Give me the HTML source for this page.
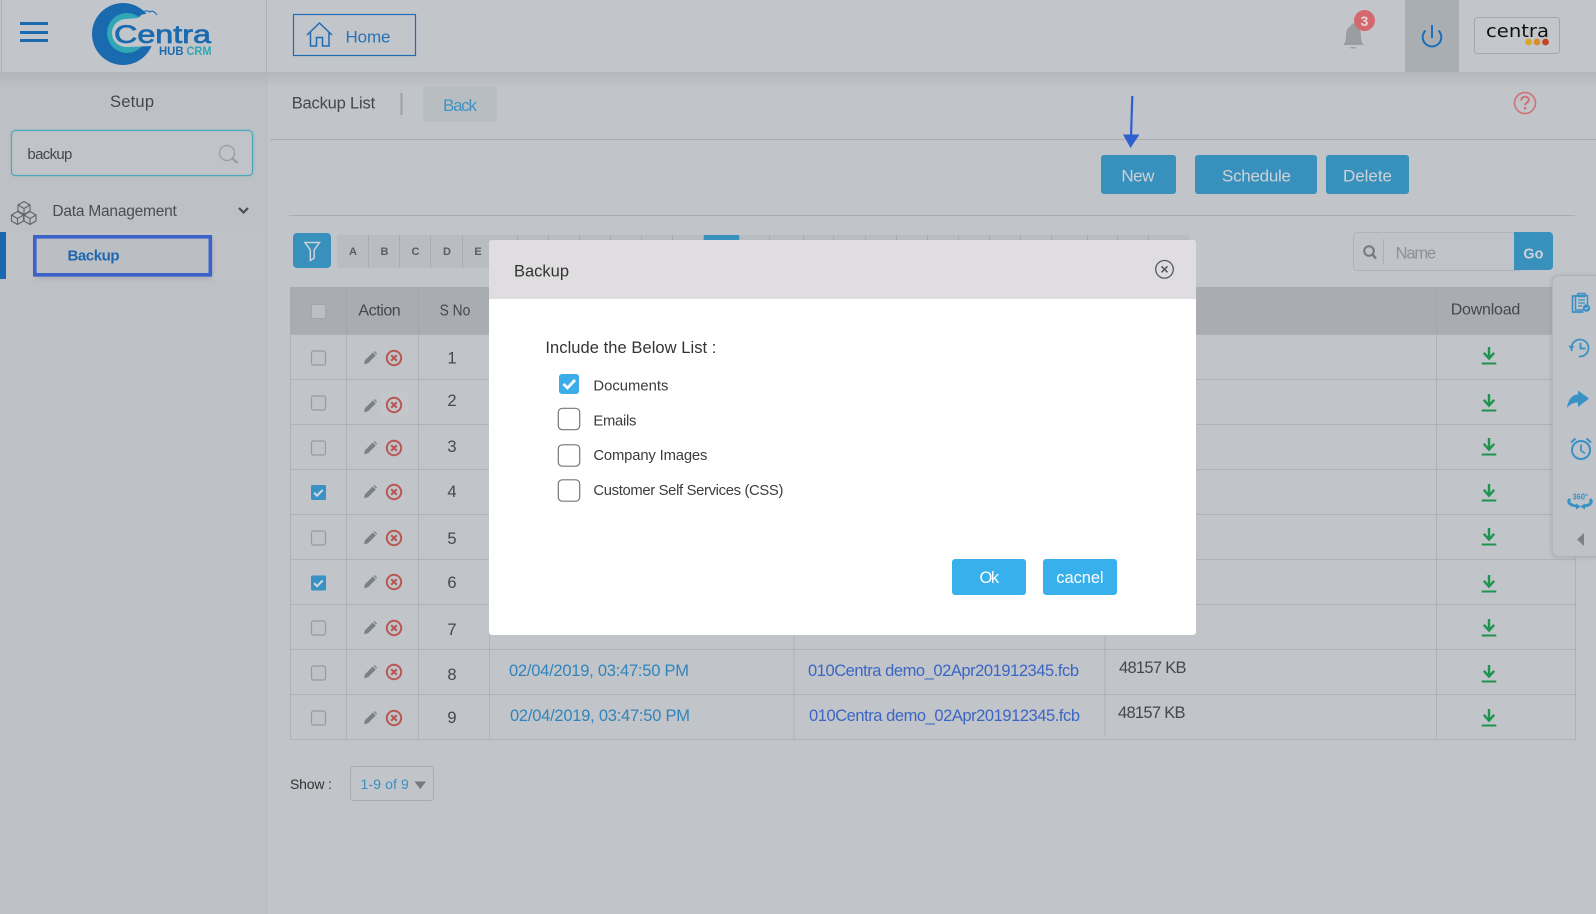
<!DOCTYPE html>
<html lang="en"><head><meta charset="utf-8"><title>Backup List</title>
<style>
html,body{margin:0;padding:0;width:1596px;height:914px;overflow:hidden;background:#c1c4c9}
svg{display:block}
text{font-family:"Liberation Sans",sans-serif;fill:#44484c;font-size:16.500px}
.b{fill:#3f94c1}
.w{fill:#cdd2d6;font-size:17px}
.f{fill:#3a66c5}
.d{fill:#2f85bb}
.l{font-size:11px;font-weight:bold;fill:#5a5e62;text-anchor:middle}
.m{font-size:14.800px;fill:#3c3c3c}
</style></head><body>
<svg width="1596" height="914" viewBox="0 0 1596 914" xmlns="http://www.w3.org/2000/svg">
<defs>
<linearGradient id="hs" x1="0" y1="0" x2="0" y2="1"><stop offset="0" stop-color="#a9adb2"/><stop offset="1" stop-color="#a9adb2" stop-opacity="0"/></linearGradient>
<filter id="sd" x="-20%" y="-20%" width="140%" height="140%"><feGaussianBlur stdDeviation="2.500"/></filter>
<g id="pen"><path d="M-6 6.300l1-4L2.800-5.500l3 3L-2 5.300z" fill="#7a8087"/><path d="M3.600-6.200l.9-.8 2.600 2.600-.9.9z" fill="#7a8087"/></g>
<g id="x"><circle r="7.200" fill="none" stroke="#b85853" stroke-width="2"/><path d="M-2.800-2.800l5.600 5.600M2.800-2.800l-5.600 5.600" stroke="#b85853" stroke-width="2.100" fill="none"/></g>
<g id="dl"><path d="M0-9V1.500" stroke="#1f9450" stroke-width="2.400"/><path d="M-5.200-3.200L0 2.600l5.200-5.800" fill="none" stroke="#1f9450" stroke-width="2.400"/><rect x="-7.300" y="6.500" width="14.600" height="2" fill="#1f9450"/></g>
<g id="cb"><rect x="-7" y="-7" width="14" height="14" rx="2" fill="#bfc3c8" stroke="#989ca1" stroke-width="1.200"/></g>
<g id="cc"><rect x="-7.500" y="-7.500" width="15" height="15" rx="1.500" fill="#3a91c4"/><path d="M-4.400.2l3 3 5.600-5.800" fill="none" stroke="#d5dade" stroke-width="2"/></g>
<g id="mb"><rect x="-10.700" y="-10.700" width="21.400" height="21.400" rx="4" fill="#fff" stroke="#777" stroke-width="1.200"/></g>
</defs>

<!-- page -->
<rect width="1596" height="914" fill="#c1c4c9"/>
<rect x="0" y="72" width="266" height="842" fill="#bdc1c5"/>
<rect x="266" y="72" width="1" height="842" fill="#b9bdc1"/>
<rect x="0" y="72" width="1596" height="16" fill="url(#hs)" opacity=".55"/>

<!-- header -->
<rect width="1596" height="72" fill="#c2c5ca"/>
<rect x="1" y="0" width="1" height="72" fill="#adb1b5"/>
<rect x="266" y="0" width="1" height="72" fill="#adb1b5"/>
<g fill="#1a6ab0"><rect x="20" y="22" width="28" height="3"/><rect x="20" y="31" width="28" height="3"/><rect x="20" y="39" width="28" height="3"/></g>

<!-- logo -->
<circle cx="123" cy="34" r="31" fill="#1a6ab0"/>
<circle cx="127" cy="33" r="20" fill="#2fa7b5"/>
<circle cx="126" cy="33" r="14" fill="#c2c5ca"/>
<path d="M126 19L138 18C141 14 146 13 150 15L156 16V14H215V60H155L153 46L126 47z" fill="#c2c5ca"/>
<path d="M139 17C141 12 146 9 150 12C152 10 155 12 157 15" stroke="#1a6ab0" stroke-width="1.100" fill="none"/>
<text x="114" y="43" style="font-size:25px;fill:#1a6ab0;stroke:#1a6ab0;stroke-width:.7" textLength="97" lengthAdjust="spacingAndGlyphs">Centra</text>
<text x="159" y="55" style="font-size:11.500px;font-weight:bold;fill:#1a6ab0" textLength="24.500" lengthAdjust="spacingAndGlyphs">HUB</text>
<text x="186.500" y="55" style="font-size:11.500px;font-weight:bold;fill:#2fa7b5" textLength="25" lengthAdjust="spacingAndGlyphs">CRM</text>

<!-- home -->
<rect x="293.500" y="14.500" width="122" height="41" fill="none" stroke="#1e6db5" stroke-width="1.200"/>
<path d="M307 35L319.500 23 332 35M310.500 32.500V46H316.500V37.500H322.500V46H329V32.500" fill="none" stroke="#1e6db5" stroke-width="1.500"/>
<text x="345.500" y="42.500" style="fill:#2a72b5;font-size:17px" textLength="45">Home</text>

<!-- right header -->
<path d="M1344 45c2.500-2 3-5 3-9.500 0-5 2-8.500 5-9.500a2.500 2.500 0 0 1 5 0c3 1 5 4.500 5 9.500 0 4.500 .5 7.500 3 9.500z" fill="#9a9ea2" transform="translate(-1 0)"/>
<path d="M1350 47h6l-1 1.500h-4z" fill="#9a9ea2"/>
<circle cx="1364.500" cy="20.500" r="10.500" fill="#d4686e"/>
<text x="1360.500" y="26" style="font-size:14px;font-weight:bold;fill:#e6d9da">3</text>
<rect x="1405" y="0" width="54" height="72" fill="#a9aeb2"/>
<path d="M1425.500 30.500a9.300 9.300 0 1 0 13 0M1432 25v13" fill="none" stroke="#1a6fb8" stroke-width="2"/>
<rect x="1474.500" y="17.500" width="85" height="36" rx="3" fill="#c3c6cb" stroke="#a4a8ac"/>
<text x="1486" y="37" style="font-size:18px;fill:#111;font-family:'DejaVu Sans',sans-serif" textLength="63" lengthAdjust="spacingAndGlyphs">centra</text>
<circle cx="1528.500" cy="42" r="3.400" fill="#d9a82a"/><circle cx="1537" cy="42" r="3.400" fill="#d98c2a"/><circle cx="1545.500" cy="42" r="3.400" fill="#c0442a"/>

<!-- sidebar -->
<text x="110" y="107" textLength="44">Setup</text>
<rect x="12" y="131" width="241" height="44" rx="4" fill="#4aa9b8" opacity=".4" filter="url(#sd)"/>
<rect x="11.500" y="130.500" width="241" height="45" rx="4" fill="#c0c4c8" stroke="#4aa9b8" stroke-width="1.200"/>
<text x="27.400" y="159" style="font-size:15px" textLength="45">backup</text>
<circle cx="227" cy="153" r="7.500" fill="none" stroke="#989ca0" stroke-width="1.200"/>
<path d="M232.500 158.500l5 4.500" stroke="#989ca0" stroke-width="2.200"/>
<g fill="none" stroke="#5f6468" stroke-width="1.100">
<path d="M18 205l6-3.500 6 3.500v6l-6 3.500-6-3.500zM18 205l6 3.500 6-3.500M24 208.500v6"/>
<path d="M11.500 215l6-3.500 6 3.500v6l-6 3.500-6-3.500zM11.500 215l6 3.500 6-3.500M17.500 218.500v6"/>
<path d="M24 215l6-3.500 6 3.500v6l-6 3.500-6-3.500zM24 215l6 3.500 6-3.500M30 218.500v6"/>
</g>
<text x="52.400" y="216" style="font-size:15.500px;fill:#4a4e52" textLength="124.400">Data Management</text>
<path d="M239 208l4.500 4.500 4.500-4.500" fill="none" stroke="#4a4e52" stroke-width="2.200"/>
<rect x="0" y="232" width="264" height="47" fill="#bfc3c8"/>
<rect x="0" y="232" width="6" height="47" fill="#1a69b0"/>
<rect x="36" y="239" width="176" height="39" fill="#8b9097" opacity=".55" filter="url(#sd)"/>
<rect x="34.800" y="236.800" width="175.500" height="38" fill="#bbbfc4" stroke="#3a62c8" stroke-width="3.600"/>
<text x="67.500" y="260.700" style="font-size:15px;font-weight:bold;fill:#1f66b0" textLength="52">Backup</text>

<!-- toolbar -->
<text x="291.700" y="108.700" textLength="83.500">Backup List</text>
<rect x="400.500" y="93" width="2" height="22" fill="#9ca0a4"/>
<rect x="423" y="86" width="74" height="36" rx="4" fill="#b8bdc2"/>
<text x="443" y="111" class="b" textLength="34" style="font-size:17px">Back</text>
<path d="M1525 92.500a10.500 10.500 0 1 0 .01 0z" fill="none" stroke="#cc7478" stroke-width="1.700"/>
<path d="M1521.300 100.500c0-5 7.500-5 7.500-.5 0 2.600-3.700 2.500-3.700 5.200" fill="none" stroke="#cc7478" stroke-width="2"/>
<rect x="1523.800" y="107" width="2.500" height="2.500" fill="#cc7478"/>
<rect x="270" y="139" width="1326" height="1" fill="#a9adb1"/>
<rect x="289" y="215" width="1286" height="1" fill="#a9adb1"/>

<path d="M1132.300 96L1131 137" stroke="#2f5fd0" stroke-width="2.200"/>
<path d="M1123 134.500h16.500L1130.500 148z" fill="#2f5fd0"/>

<g fill="#3890bd">
<rect x="1101" y="155" width="75" height="39" rx="3"/>
<rect x="1195" y="155" width="122" height="39" rx="3"/>
<rect x="1326" y="155" width="83" height="39" rx="3"/>
<rect x="293" y="233" width="38" height="35" rx="4"/>
</g>
<text x="1121.400" y="181.700" class="w" textLength="33">New</text>
<text x="1222" y="181.700" class="w" textLength="69">Schedule</text>
<text x="1343" y="181.700" class="w" textLength="49">Delete</text>
<path d="M305 242.500h14.500l-5.300 7.500v8l-3.900 2.500V250z" fill="none" stroke="#cdd2d6" stroke-width="1.500"/>

<!-- alpha bar -->
<rect x="337" y="235" width="852" height="33" rx="2" fill="#b9bdc2"/>
<g fill="#a9adb1">
<rect x="368" y="235" width="1" height="33"/><rect x="399" y="235" width="1" height="33"/><rect x="430" y="235" width="1" height="33"/><rect x="462" y="235" width="1" height="33"/>
<rect x="517" y="235" width="1" height="33"/><rect x="548" y="235" width="1" height="33"/><rect x="579" y="235" width="1" height="33"/><rect x="610" y="235" width="1" height="33"/><rect x="641" y="235" width="1" height="33"/>
<rect x="672" y="235" width="1" height="33"/><rect x="703" y="235" width="1" height="33"/><rect x="739" y="235" width="1" height="33"/><rect x="769" y="235" width="1" height="33"/><rect x="803" y="235" width="1" height="33"/><rect x="833" y="235" width="1" height="33"/><rect x="865" y="235" width="1" height="33"/>
<rect x="896" y="235" width="1" height="33"/><rect x="927" y="235" width="1" height="33"/><rect x="958" y="235" width="1" height="33"/><rect x="989" y="235" width="1" height="33"/><rect x="1020" y="235" width="1" height="33"/><rect x="1051" y="235" width="1" height="33"/>
<rect x="1087" y="235" width="1" height="33"/><rect x="1117" y="235" width="1" height="33"/><rect x="1148" y="235" width="1" height="33"/>
</g>
<rect x="704" y="235" width="35" height="33" fill="#3890bd"/>
<text x="353" y="255" class="l">A</text><text x="384.500" y="255" class="l">B</text><text x="415.500" y="255" class="l">C</text><text x="447" y="255" class="l">D</text><text x="478" y="255" class="l">E</text>

<!-- name search -->
<rect x="1353.500" y="232.500" width="170" height="38" rx="4" fill="#c0c4c8" stroke="#b0b4b8"/>
<path d="M1514 232h35a4 4 0 0 1 4 4v30a4 4 0 0 1-4 4h-35z" fill="#3890bd"/>
<circle cx="1369" cy="251" r="4.800" fill="none" stroke="#75797d" stroke-width="2"/><path d="M1372.500 254.500l3.500 4" stroke="#75797d" stroke-width="2.400"/>
<rect x="1383" y="239" width="1" height="25" fill="#acb0b4"/>
<text x="1395.600" y="258.700" style="fill:#8e9296;font-size:16.500px" textLength="40.500">Name</text>
<text x="1523.400" y="258.700" class="w" style="font-size:15px;font-weight:bold" textLength="20" lengthAdjust="spacingAndGlyphs">Go</text>

<!-- table -->
<rect x="290" y="287" width="1286" height="47" fill="#a9adb2"/>
<g stroke="#aeb1b6" fill="none">
<path d="M290 334.500H1576M290 379.500H1576M290 424.500H1576M290 469.500H1576M290 514.500H1576M290 559.500H1576M290 604.500H1576M290 649.500H1576M290 694.500H1576M290 739.500H1576"/>
<path d="M290.500 334V740M346.500 334V740M418.500 334V740M489.500 334V740M794 334V740M1105 334V736M1436.500 334V740M1575.500 334V740"/>
</g>
<g fill="#a2a6ab"><rect x="346" y="287" width="1" height="47"/><rect x="418" y="287" width="1" height="47"/><rect x="1436" y="287" width="1" height="47"/></g>
<text x="358.400" y="315.700" textLength="42.300" style="font-size:16px">Action</text>
<text x="439.600" y="315.700" style="font-size:16px" textLength="30.700" lengthAdjust="spacingAndGlyphs">S No</text>
<text x="1450.700" y="314.300" textLength="69.600" style="font-size:16px">Download</text>
<rect x="311.500" y="304.500" width="14" height="14" rx="2" fill="#bcc0c5" stroke="#a3a7ab"/>

<use href="#cb" x="318.500" y="358"/><use href="#cb" x="318.500" y="403"/><use href="#cb" x="318.500" y="448"/><use href="#cc" x="318.500" y="492.500"/><use href="#cb" x="318.500" y="538"/><use href="#cc" x="318.500" y="583"/><use href="#cb" x="318.500" y="628"/><use href="#cb" x="318.500" y="673"/><use href="#cb" x="318.500" y="718"/>

<rect x="382" y="391" width="27" height="26" fill="#c3c6ca"/>
<use href="#pen" x="370" y="358"/><use href="#pen" x="370" y="406"/><use href="#pen" x="370" y="448"/><use href="#pen" x="370" y="492"/><use href="#pen" x="370" y="538"/><use href="#pen" x="370" y="582"/><use href="#pen" x="370" y="628"/><use href="#pen" x="370" y="672"/><use href="#pen" x="370" y="718"/>
<use href="#x" x="394" y="358"/><use href="#x" x="394" y="405"/><use href="#x" x="394" y="448"/><use href="#x" x="394" y="492"/><use href="#x" x="394" y="538"/><use href="#x" x="394" y="582"/><use href="#x" x="394" y="628"/><use href="#x" x="394" y="672"/><use href="#x" x="394" y="718"/>

<g text-anchor="middle">
<text x="452" y="363.500">1</text><text x="452" y="406">2</text><text x="452" y="452">3</text><text x="452" y="497">4</text><text x="452" y="544">5</text><text x="452" y="588">6</text><text x="452" y="635">7</text><text x="452" y="680">8</text><text x="452" y="723">9</text>
</g>

<use href="#dl" x="1489" y="356"/><use href="#dl" x="1489" y="403"/><use href="#dl" x="1489" y="447"/><use href="#dl" x="1489" y="493"/><use href="#dl" x="1489" y="537"/><use href="#dl" x="1489" y="584"/><use href="#dl" x="1489" y="628"/><use href="#dl" x="1489" y="674"/><use href="#dl" x="1489" y="718"/>

<text x="509" y="676" class="d" textLength="180">02/04/2019, 03:47:50 PM</text>
<text x="510" y="721" class="d" textLength="180">02/04/2019, 03:47:50 PM</text>
<text x="808" y="676" class="f" textLength="271">010Centra demo_02Apr201912345.fcb</text>
<text x="809" y="721" class="f" textLength="271">010Centra demo_02Apr201912345.fcb</text>
<text x="1119" y="673" textLength="67.500">48157 KB</text>
<text x="1118" y="718" textLength="67.500">48157 KB</text>

<!-- show -->
<text x="290" y="789" style="font-size:14px;fill:#333" textLength="42">Show :</text>
<rect x="350.500" y="766.500" width="83" height="34" rx="3" fill="#c1c4c9" stroke="#a9adb1"/>
<text x="360.500" y="789" style="font-size:14px;fill:#3a91c4" textLength="48.300">1-9 of 9</text>
<path d="M414.500 781.500h11.500L420.200 789z" fill="#75797d"/>

<!-- right floating panel -->
<rect x="1552" y="276" width="50" height="281" rx="6" fill="#8f9398" opacity=".6" filter="url(#sd)"/>
<rect x="1552.500" y="275.500" width="50" height="281" rx="6" fill="#bfc3c8" stroke="#b0b4b8"/>
<g fill="none" stroke="#3a91c4" stroke-width="1.700">
<path d="M1577 296h-4.500v16h11"/>
<path d="M1575.500 295.500v14.500h9M1575.500 295.500h12v9M1578 293.500h7v3h-7z" stroke-width="1.500"/>
<path d="M1578 300h7M1578 303h7M1578 306h4" stroke-width="1.300"/>
<circle cx="1580" cy="348" r="8.500" stroke-dasharray="44 9.400" transform="rotate(160 1580 348)" stroke-width="1.800"/>
<path d="M1580.500 343v5.500h5" stroke-width="1.900"/>
<circle cx="1581" cy="450" r="9" stroke-width="2"/>
<path d="M1581 444.500v6l4 3" stroke-width="1.700"/>
<path d="M1571 442.500l4.500-4M1586.500 438.500l4.500 4" stroke-width="2"/>
<path d="M1570 499c-3 3.500 0 6.500 7 7M1590 499c3 3.500 0 6.500-6 7" stroke-width="3"/>
</g>
<circle cx="1586.500" cy="308" r="3.800" fill="#3a91c4"/><path d="M1584.800 308l1.300 1.300 2.200-2.400" stroke="#c5cace" fill="none" stroke-width=".8"/>
<path d="M1568.500 345.500l2.600 4.500 3.400-3.800z" fill="#3a91c4"/>
<path d="M1578 390.500L1589 398.500 1578 407V402.500C1573 402.500 1570 404.500 1567 408 1568 400 1572 394.500 1578 394.500z" fill="#3a91c4"/>
<text x="1572.500" y="499.500" style="font-size:8.500px;font-weight:bold;fill:#3a91c4" textLength="15.500" lengthAdjust="spacingAndGlyphs">360°</text>
<path d="M1576 503.500l5 3-5 3zM1585 503.500l-5 3 5 3z" fill="#3a91c4"/>
<path d="M1584 533v13l-7-6.500z" fill="#7d8185"/>

<!-- modal -->
<path d="M492 240H1193a3 3 0 0 1 3 3V632a3 3 0 0 1-3 3H492a3 3 0 0 1-3-3V243a3 3 0 0 1 3-3z" fill="#fff"/>
<path d="M492 240H1193a3 3 0 0 1 3 3V299H489V243a3 3 0 0 1 3-3z" fill="#dfdddf"/>
<text x="514" y="276.700" style="fill:#333" textLength="55">Backup</text>
<circle cx="1164.500" cy="269.300" r="8.800" fill="none" stroke="#55585b" stroke-width="1.300"/>
<path d="M1161.500 266.300l6 6M1167.500 266.300l-6 6" stroke="#55585b" stroke-width="1.500"/>
<text x="545.400" y="353" style="fill:#333" textLength="171">Include the Below List :</text>
<rect x="559" y="374" width="20" height="20" rx="3" fill="#3baeea"/>
<path d="M563.500 384l4 4 7.500-8" fill="none" stroke="#fff" stroke-width="2.800"/>
<use href="#mb" x="569" y="419"/><use href="#mb" x="569" y="455.500"/><use href="#mb" x="569" y="490.500"/>
<text x="593.400" y="390.700" class="m" textLength="75">Documents</text>
<text x="593.400" y="425.300" class="m" textLength="43">Emails</text>
<text x="593.400" y="460" class="m" textLength="114">Company Images</text>
<text x="593.400" y="495" class="m" textLength="190">Customer Self Services (CSS)</text>
<rect x="952" y="559" width="74" height="36" rx="3" fill="#38b0ec"/>
<rect x="1043" y="559" width="74" height="36" rx="3" fill="#38b0ec"/>
<text x="979.500" y="583" style="fill:#fff" textLength="19.600">Ok</text>
<text x="1056.300" y="583" style="fill:#fff" textLength="47.300">cacnel</text>
</svg>
</body></html>
